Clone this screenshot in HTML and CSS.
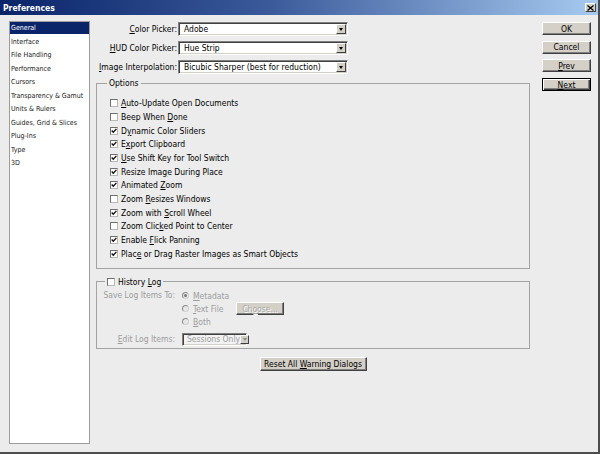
FILE: index.html
```html
<!DOCTYPE html>
<html>
<head>
<meta charset="utf-8">
<title>Preferences</title>
<link rel="stylesheet" href="styles.css">
</head>
<body>
<div class="window">
  <div class="titlebar">
    <span class="title">Preferences</span>
    <span class="close"><svg width="7" height="6" viewBox="0 0 7 6"><path d="M0.5 0.5L6.5 5.5M6.5 0.5L0.5 5.5" stroke="#000" stroke-width="1.3"/></svg></span>
  </div>
  <div class="content">
    <ul class="sidebar">
      <li class="sel">General</li>
      <li>Interface</li>
      <li>File Handling</li>
      <li>Performance</li>
      <li>Cursors</li>
      <li>Transparency &amp; Gamut</li>
      <li>Units &amp; Rulers</li>
      <li>Guides, Grid &amp; Slices</li>
      <li>Plug-Ins</li>
      <li>Type</li>
      <li>3D</li>
    </ul>
    <div class="main">
      <div class="fields">
        <div class="field"><span class="flabel"><u>C</u>olor Picker:</span><div class="select"><span>Adobe</span><i class="arrow"></i></div></div>
        <div class="field"><span class="flabel"><u>H</u>UD Color Picker:</span><div class="select"><span>Hue Strip</span><i class="arrow"></i></div></div>
        <div class="field"><span class="flabel"><u>I</u>mage Interpolation:</span><div class="select"><span>Bicubic Sharper (best for reduction)</span><i class="arrow"></i></div></div>
      </div>
      <fieldset class="group options">
        <legend>Options</legend>
        <div class="checks">
          <div class="check"><span class="box"></span><span><u>A</u>uto-Update Open Documents</span></div>
          <div class="check"><span class="box"></span><span>Beep When <u>D</u>one</span></div>
          <div class="check"><span class="box on"></span><span>D<u>y</u>namic Color Sliders</span></div>
          <div class="check"><span class="box on"></span><span>E<u>x</u>port Clipboard</span></div>
          <div class="check"><span class="box on"></span><span><u>U</u>se Shift Key for Tool Switch</span></div>
          <div class="check"><span class="box on"></span><span>Resize Ima<u>g</u>e During Place</span></div>
          <div class="check"><span class="box on"></span><span>Animated <u>Z</u>oom</span></div>
          <div class="check"><span class="box"></span><span>Zoom <u>R</u>esizes Windows</span></div>
          <div class="check"><span class="box on"></span><span>Zoom with <u>S</u>croll Wheel</span></div>
          <div class="check"><span class="box"></span><span>Zoom Clic<u>k</u>ed Point to Center</span></div>
          <div class="check"><span class="box on"></span><span>Enable <u>F</u>lick Panning</span></div>
          <div class="check"><span class="box on"></span><span>Plac<u>e</u> or Drag Raster Images as Smart Objects</span></div>
        </div>
      </fieldset>
      <fieldset class="group history">
        <legend><span class="box"></span><span>History <u>L</u>og</span></legend>
        <div class="hist-grid">
          <div class="hlabel">Save Log Items To:</div>
          <div class="radios">
            <div class="radio"><span class="rb on"></span><span><u>M</u>etadata</span></div>
            <div class="radio"><span class="rb"></span><span class="rt"><u>T</u>ext File</span><span class="btn dis choose"><span>Ch<u>o</u>ose...</span></span></div>
            <div class="radio"><span class="rb"></span><span><u>B</u>oth</span></div>
          </div>
          <div class="hlabel edit"><u>E</u>dit Log Items:</div>
          <div class="select small dis"><span>Sessions Only</span><i class="arrow"></i></div>
        </div>
      </fieldset>
      <div class="reset-row"><span class="btn reset"><span>Reset All <u>W</u>arning Dialogs</span></span></div>
    </div>
    <div class="side-buttons">
      <span class="btn"><span>OK</span></span>
      <span class="btn"><span>Cancel</span></span>
      <span class="btn"><span><u>P</u>rev</span></span>
      <span class="btn default"><span><u>N</u>ext</span></span>
    </div>
  </div>
</div>
</body>
</html>
```
FILE: styles.css
```css
* { box-sizing: border-box; }
html, body { margin: 0; padding: 0; }
body {
  width: 600px;
  height: 454px;
  overflow: hidden;
  background: #ececec;
  font-family: "DejaVu Sans Condensed", "DejaVu Sans", "Liberation Sans", sans-serif;
  font-size: 8.5px;
  color: #000;
}
u { text-decoration: underline; text-underline-offset: 1px; }

.window {
  width: 600px;
  height: 454px;
  display: flex;
  flex-direction: column;
  border-right: 2px solid #4d4d4d;
  border-bottom: 2px solid #4d4d4d;
  background: #ececec;
}

.titlebar {
  height: 15px;
  flex: none;
  display: flex;
  align-items: center;
  justify-content: space-between;
  padding: 0 2px 0 3px;
  background: linear-gradient(to right, #0a246a 0%, #3a5a9a 45%, #a6caf0 100%);
}
.title {
  color: #fff;
  font-weight: bold;
  font-size: 8.5px;
  font-family: "DejaVu Sans Condensed", "DejaVu Sans", sans-serif;
}
.close {
  width: 11px;
  height: 9px;
  background: #d4d0c8;
  border: 1px solid;
  border-color: #fff #404040 #404040 #fff;
  display: flex;
  align-items: center;
  justify-content: center;
}
.close svg { display: block; }

.content {
  flex: 1;
  display: flex;
  align-items: flex-start;
}

.sidebar {
  list-style: none;
  margin: 6px 0 0 9px;
  padding: 0;
  width: 81px;
  height: 423px;
  background: #fff;
  border: 1px solid #9d9d9d;
  font-size: 7px;
  flex: none;
}
.sidebar li {
  height: 12px;
  line-height: 12px;
  margin-bottom: 1.5px;
  padding-left: 1px;
  white-space: nowrap;
  color: #1a1a1a;
}
.sidebar li.sel {
  background: #0a246a;
  color: #fff;
}

.main {
  margin-left: 1px;
  width: 439px;
  padding-top: 7px;
  flex: none;
}
.fields {
  display: flex;
  flex-direction: column;
  gap: 5px;
}
.field {
  display: flex;
  align-items: center;
  height: 14px;
}
.flabel {
  width: 86px;
  text-align: right;
  margin-right: 1px;
  white-space: nowrap;
}
.select {
  width: 170px;
  height: 14px;
  background: #fff;
  border: 1px solid;
  border-color: #808080 #fff #fff #808080;
  box-shadow: inset 1px 1px 0 #404040, inset -1px -1px 0 #d4d0c8;
  display: flex;
  align-items: center;
  padding-left: 5px;
  white-space: nowrap;
}
.arrow {
  margin-left: auto;
  margin-right: 1px;
  width: 10px;
  height: 10px;
  background: #d4d0c8;
  border: 1px solid;
  border-color: #fff #404040 #404040 #fff;
  display: flex;
  align-items: center;
  justify-content: center;
  flex: none;
}
.arrow::after {
  content: "";
  border-left: 2.5px solid transparent;
  border-right: 2.5px solid transparent;
  border-top: 3px solid #000;
}

.group {
  margin: 0 0 0 5px;
  width: 434px;
  border: 1px solid #a3a3a3;
  padding: 0;
  min-width: 0;
}
.group legend {
  padding: 0 2px;
  line-height: 12px;
}
.options { margin-top: 3px; }
.options legend { margin-left: 10px; }
.checks { padding: 7.5px 0 7.5px 13px; }
.check {
  display: flex;
  align-items: center;
  height: 13.67px;
  white-space: nowrap;
}
.box {
  width: 8px;
  height: 8px;
  flex: none;
  background: #fff;
  border: 1px solid;
  border-color: #6f6f6f #b8b8b8 #b8b8b8 #6f6f6f;
  margin-right: 3px;
  display: inline-block;
}
.box.on {
  background: #fff url("data:image/svg+xml,%3Csvg xmlns='http://www.w3.org/2000/svg' width='6' height='6' viewBox='0 0 6 6'%3E%3Cpath d='M0.7 2.6L2.3 4.3L5.4 0.9' fill='none' stroke='%23111' stroke-width='1.4'/%3E%3C/svg%3E") center / 6px 6px no-repeat;
}

.history { margin-top: 7px; }
.history legend {
  margin-left: 8px;
  display: flex;
  align-items: center;
}
.hist-grid {
  display: grid;
  grid-template-columns: 78px 1fr;
  column-gap: 7px;
  padding: 1.2px 0 2.5px 0;
  color: #9c9c9c;
}
.hlabel {
  text-align: right;
  line-height: 13px;
  white-space: nowrap;
}
.hlabel.edit {
  margin-top: 4.5px;
  line-height: 13px;
}
.radios { display: flex; flex-direction: column; }
.radio {
  display: flex;
  align-items: center;
  height: 13px;
  white-space: nowrap;
}
.rb {
  width: 7px;
  height: 7px;
  border-radius: 50%;
  border: 1px solid #a0a0a0;
  border-color: #8a8a8a #d0d0d0 #d0d0d0 #8a8a8a;
  background: #e6e6e6;
  margin-right: 4px;
  flex: none;
  display: flex;
  align-items: center;
  justify-content: center;
}
.rb.on::after {
  content: "";
  width: 3px;
  height: 3px;
  border-radius: 50%;
  background: #7a7a7a;
}
.rt { width: 43px; }

.select.small {
  width: 65px;
  height: 13px;
  margin-top: 4.5px;
  padding-left: 4px;
}
.select.dis {
  background: #f2f2f2;
  color: #9c9c9c;
}
.select.dis .arrow { width: 9px; height: 9px; }
.select.dis .arrow::after { border-top-color: #8c8c8c; }

.btn {
  background: #d4d0c8;
  border: 1px solid;
  border-color: #fff #404040 #404040 #fff;
  box-shadow: inset -1px -1px 0 #808080;
  height: 13px;
  display: flex;
  align-items: center;
  justify-content: center;
  white-space: nowrap;
  color: #000;
}
.btn.dis {
  color: #a8a8a8;
  text-shadow: 1px 1px 0 #fff;
}
.choose { width: 48px; }
.btn.default {
  border-color: #000;
  box-shadow: inset 1px 1px 0 #fff, inset -1px -1px 0 #404040, inset -2px -2px 0 #808080;
}

.reset-row {
  margin: 7.5px 0 0 5px;
  width: 434px;
  display: flex;
  justify-content: center;
}
.reset { width: 107px; height: 14px; }

.side-buttons {
  margin-left: 12px;
  padding-top: 7px;
  width: 49px;
  display: flex;
  flex-direction: column;
  gap: 5.7px;
  flex: none;
}
.side-buttons .btn { width: 49px; }
```
